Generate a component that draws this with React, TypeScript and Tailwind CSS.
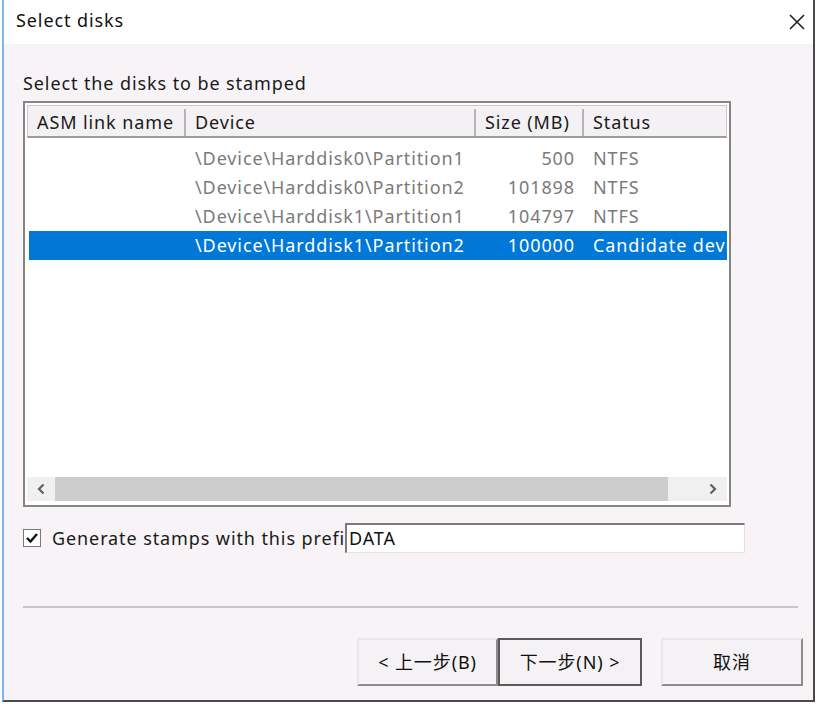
import React from "react";

const font = { fontFamily: '"Noto Sans", "Noto Sans CJK SC", sans-serif' };

const rows = [
  { dev: "\\Device\\Harddisk0\\Partition1", size: "500", status: "NTFS", sel: false },
  { dev: "\\Device\\Harddisk0\\Partition2", size: "101898", status: "NTFS", sel: false },
  { dev: "\\Device\\Harddisk1\\Partition1", size: "104797", status: "NTFS", sel: false },
  { dev: "\\Device\\Harddisk1\\Partition2", size: "100000", status: "Candidate device", sel: true },
];

function HeaderCell({ w, children, last }: { w: string; children: React.ReactNode; last?: boolean }) {
  return (
    <div
      className={`${w} h-full flex items-center pl-[9px] shrink-0 overflow-hidden whitespace-nowrap ${
        last ? "" : "border-r-2 border-r-[#b4b4b4]"
      }`}
    >
      {children}
    </div>
  );
}

export default function App() {
  return (
    <div className="w-[818px] h-[704px] bg-white pl-[2px] pr-[3px] pb-[2px] tracking-[0.9px]" style={font}>
      <div className="h-full flex flex-col border-l-2 border-l-[#7cb7ec] border-r-2 border-r-[#4a4a4a] border-b-2 border-b-[#4a4a4a]">
        {/* title bar */}
        <div className="h-[44px] bg-white flex items-center justify-between pl-[12px] pr-[7px] shrink-0">
          <span className="text-[18px] text-[#111] leading-none pb-[4px]">Select disks</span>
          <svg width="16" height="16" viewBox="0 0 16 16" className="mr-[1px] mb-[1px]">
            <path d="M1 1 L15 15 M15 1 L1 15" stroke="#222" strokeWidth="1.6" fill="none" />
          </svg>
        </div>

        {/* content */}
        <div className="flex-1 bg-[#f7f3f7] flex flex-col pl-[19px]">
          <div className="mt-[27px] h-[24px] flex items-center text-[18px] text-[#1a1a1a]">
            Select the disks to be stamped
          </div>

          {/* list */}
          <div className="mt-[6px] w-[708px] h-[406px] border-2 border-[#848484] bg-white p-[2px] flex flex-col">
            <div className="h-[33px] bg-[#f3f1f3] border border-[#c8c8c8] border-b-2 border-b-[#9c9c9c] flex text-[18px] text-[#1a1a1a] shrink-0 pt-[3px]">
              <HeaderCell w="w-[158px]">ASM link name</HeaderCell>
              <HeaderCell w="w-[290px]">Device</HeaderCell>
              <HeaderCell w="w-[108px]">Size (MB)</HeaderCell>
              <HeaderCell w="flex-1" last>
                Status
              </HeaderCell>
            </div>
            <div className="flex-1 pt-[6px] flex flex-col">
              {rows.map((r, i) => (
                <div
                  key={i}
                  className={`h-[29px] ml-[2px] flex items-center text-[18px] whitespace-nowrap overflow-hidden ${
                    r.sel ? "bg-[#0078d7] text-white" : "text-[#7a7a7a]"
                  }`}
                >
                  <div className="w-[156px] shrink-0" />
                  <div className="w-[290px] shrink-0 pl-[10px]">{r.dev}</div>
                  <div className="w-[108px] shrink-0 text-right pr-[8px]">{r.size}</div>
                  <div className="flex-1 pl-[10px] overflow-hidden">{r.status}</div>
                </div>
              ))}
            </div>
            {/* horizontal scrollbar */}
            <div className="h-[24px] mb-[2px] bg-[#f0f0f0] flex items-center shrink-0">
              <div className="w-[28px] h-full flex items-center justify-center">
                <svg width="10" height="12" viewBox="0 0 10 12">
                  <path d="M7.5 1.5 L3 6 L7.5 10.5" stroke="#606060" strokeWidth="2.2" fill="none" />
                </svg>
              </div>
              <div className="w-[613px] h-full bg-[#cdcdcd]" />
              <div className="flex-1" />
              <div className="w-[28px] h-full flex items-center justify-center">
                <svg width="10" height="12" viewBox="0 0 10 12">
                  <path d="M2.5 1.5 L7 6 L2.5 10.5" stroke="#606060" strokeWidth="2.2" fill="none" />
                </svg>
              </div>
            </div>
          </div>

          {/* prefix row */}
          <div className="mt-[16px] flex items-center h-[30px]">
            <div className="w-[18px] h-[18px] border border-[#7a7a7a] bg-white flex items-center justify-center shrink-0">
              <svg width="14" height="14" viewBox="0 0 14 14">
                <path d="M2 7 L5.5 10.5 L12 3" stroke="#111" strokeWidth="2.4" fill="none" />
              </svg>
            </div>
            <div className="w-[293px] ml-[11px] overflow-hidden whitespace-nowrap text-[18px] text-[#1a1a1a]">
              Generate stamps with this prefix:
            </div>
            <div className="w-[400px] h-[30px] bg-white border-t-2 border-l-2 border-t-[#7a7a7a] border-l-[#7a7a7a] border-r border-b border-r-[#e2e2e2] border-b-[#e2e2e2] flex items-center pl-[2px] text-[18px] text-[#111]">
              DATA
            </div>
          </div>

          {/* separator */}
          <div className="mt-[53px] w-[775px] h-[2px] bg-[#c8c8c8]" />

          {/* buttons */}
          <div className="mt-[30px] flex pl-[334px] text-[18px] text-[#111]">
            <button className="w-[141px] h-[48px] bg-[#f4f2f4] border-2 border-t-[#e8e8e8] border-l-[#e8e8e8] border-r-[#8c8c8c] border-b-[#8c8c8c] flex items-center justify-center">
              &lt; 上一步(B)
            </button>
            <button className="w-[144px] h-[48px] bg-[#f4f2f4] border-2 border-[#5a5a5a] flex items-center justify-center">
              下一步(N) &gt;
            </button>
            <button className="ml-[19px] w-[142px] h-[48px] bg-[#f4f2f4] border-2 border-t-[#e8e8e8] border-l-[#e8e8e8] border-r-[#8c8c8c] border-b-[#8c8c8c] flex items-center justify-center">
              取消
            </button>
          </div>
        </div>
      </div>
    </div>
  );
}
